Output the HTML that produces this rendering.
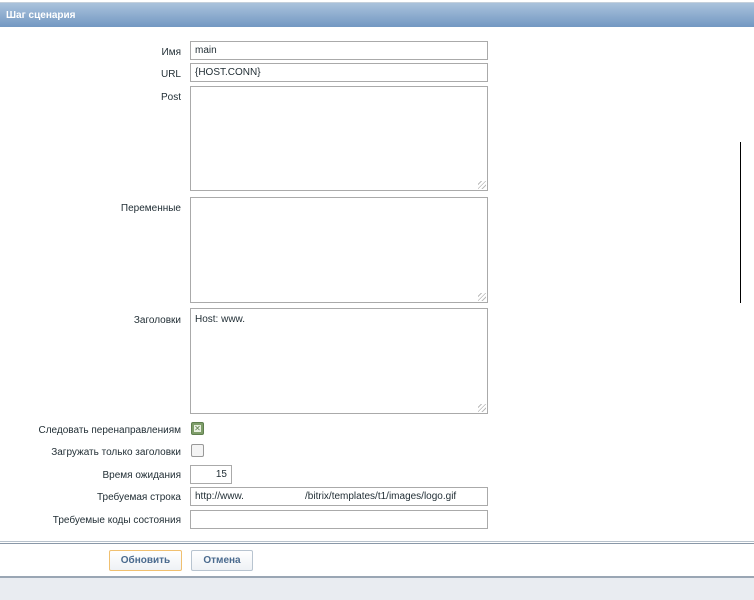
<!DOCTYPE html><html><head><style>
body{margin:0;width:754px;height:600px;background:#fff;font-family:"Liberation Sans",sans-serif;font-size:10px;color:#1f2c33;position:relative;overflow:hidden}
.a{position:absolute}
.hdr{left:0;top:2px;width:754px;height:25px;border-top:1px solid #c4d0dc;background:linear-gradient(#a9c2dc,#7398c2);color:#fff;font-weight:bold;font-size:10px;line-height:25px;padding-left:6px;box-sizing:border-box}
.l{right:573px;text-align:right;white-space:nowrap;line-height:12px;margin-top:2px}
.i{left:190px;width:298px;border:1px solid #aaa;box-sizing:border-box;background:#fff;padding-left:4px;line-height:18px}
.grip{position:absolute;right:1px;bottom:1px;width:8px;height:8px;background:repeating-linear-gradient(135deg,transparent 0 2px,#bbb 2px 3px)}
.cb{width:13px;height:13px;border:1px solid #999;border-radius:2px;box-sizing:border-box;left:191px}
.btn{height:21px;top:550px;border:1px solid #b8c4d0;background:linear-gradient(#fff,#eef1f5);color:#4a6a8e;font-weight:bold;text-align:center;line-height:20px;box-sizing:border-box;border-radius:2px}
</style></head><body>
<div class="a hdr">Шаг сценария</div>
<div class="a l" style="top:45px">Имя</div><div class="a i" style="top:41px;height:19px">main</div>
<div class="a l" style="top:67px">URL</div><div class="a i" style="top:63px;height:19px">{HOST.CONN}</div>
<div class="a l" style="top:90px">Post</div><div class="a i" style="top:86px;height:105px"><div class="grip"></div></div>
<div class="a l" style="top:201px">Переменные</div><div class="a i" style="top:197px;height:106px"><div class="grip"></div></div>
<div class="a l" style="top:313px">Заголовки</div><div class="a i" style="top:308px;height:106px;padding-top:5px;line-height:12px">Host: www.<div class="grip"></div></div>
<div class="a" style="left:740px;top:142px;width:1px;height:161px;background:#000"></div>
<div class="a l" style="top:423px">Следовать перенаправлениям</div>
<div class="a cb" style="top:422px;background:#7f9e6a;border-color:#5f7f4e"><div style="position:absolute;left:2px;top:2px;width:7px;height:7px;background:#e8f0e0;color:#5f7f4e;font-size:8px;line-height:7px;text-align:center">✕</div></div>
<div class="a l" style="top:445px">Загружать только заголовки</div>
<div class="a cb" style="top:444px;background:#f4f4f4"></div>
<div class="a l" style="top:468px">Время ожидания</div><div class="a i" style="top:465px;height:19px;width:42px;text-align:right;padding-right:4px">15</div>
<div class="a l" style="top:490px">Требуемая строка</div><div class="a i" style="top:487px;height:19px;white-space:pre">http://www.                      /bitrix/templates/t1/images/logo.gif</div>
<div class="a l" style="top:513px">Требуемые коды состояния</div><div class="a i" style="top:510px;height:19px"></div>
<div class="a" style="left:0;top:541px;width:754px;height:3px;border-top:1px solid #b8c2cc;border-bottom:1px solid #8a98a8;box-sizing:border-box"></div>
<div class="a btn" style="left:109px;width:73px;border-color:#f0c070">Обновить</div>
<div class="a btn" style="left:191px;width:62px">Отмена</div>
<div class="a" style="left:0;top:576px;width:754px;height:24px;background:#e9ecf1;border-top:2px solid #9aa6b4;box-sizing:border-box"></div>
</body></html>
